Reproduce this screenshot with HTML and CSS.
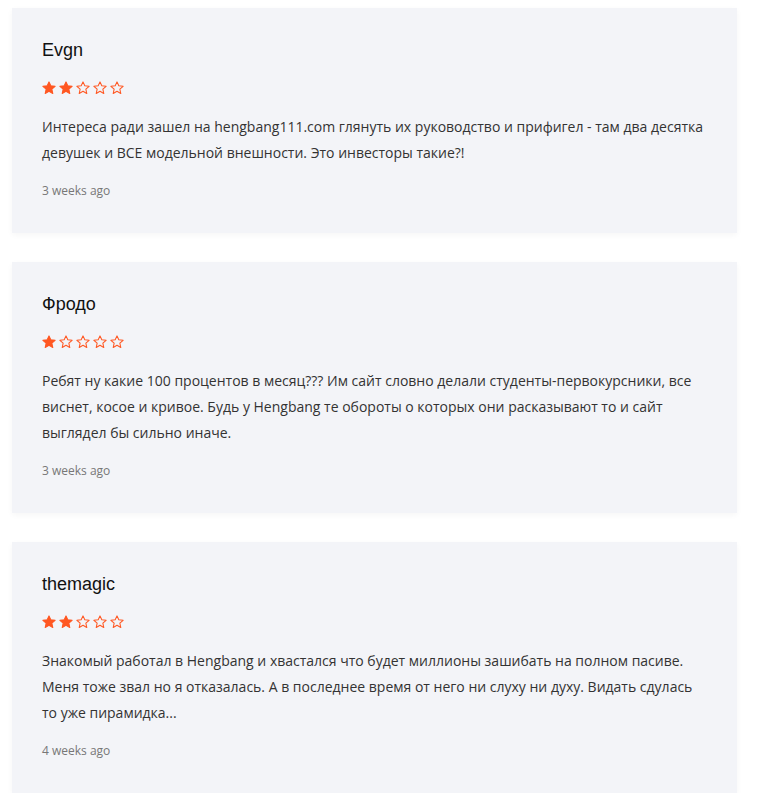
FILE: index.html
```html
<!DOCTYPE html>
<html lang="ru">
<head>
  <meta charset="UTF-8" />
  <title>Отзывы</title>
  <meta name="viewport" content="width=device-width, initial-scale=1.0" />
  <link rel="stylesheet" href="styles.css">
</head>
<body>

  <div class="reviews">

    <div class="review">
      <div class="review-name">Evgn</div>
      <div class="stars">
        <svg class="star full" viewBox="0 0 24 24"><polygon points="12,1.5 15.1,8.3 22.5,9.1 16.9,14.1 18.5,21.5 12,17.7 5.5,21.5 7.1,14.1 1.5,9.1 8.9,8.3"/></svg>
        <svg class="star full" viewBox="0 0 24 24"><polygon points="12,1.5 15.1,8.3 22.5,9.1 16.9,14.1 18.5,21.5 12,17.7 5.5,21.5 7.1,14.1 1.5,9.1 8.9,8.3"/></svg>
        <svg class="star" viewBox="0 0 24 24"><polygon points="12,1.5 15.1,8.3 22.5,9.1 16.9,14.1 18.5,21.5 12,17.7 5.5,21.5 7.1,14.1 1.5,9.1 8.9,8.3"/></svg>
        <svg class="star" viewBox="0 0 24 24"><polygon points="12,1.5 15.1,8.3 22.5,9.1 16.9,14.1 18.5,21.5 12,17.7 5.5,21.5 7.1,14.1 1.5,9.1 8.9,8.3"/></svg>
        <svg class="star" viewBox="0 0 24 24"><polygon points="12,1.5 15.1,8.3 22.5,9.1 16.9,14.1 18.5,21.5 12,17.7 5.5,21.5 7.1,14.1 1.5,9.1 8.9,8.3"/></svg>
      </div>
      <p class="review-text">Интереса ради зашел на hengbang111.com глянуть их руководство и прифигел - там два десятка девушек и ВСЕ модельной внешности. Это инвесторы такие?!</p>
      <div class="review-date">3 weeks ago</div>
    </div>

    <div class="review">
      <div class="review-name">Фродо</div>
      <div class="stars">
        <svg class="star full" viewBox="0 0 24 24"><polygon points="12,1.5 15.1,8.3 22.5,9.1 16.9,14.1 18.5,21.5 12,17.7 5.5,21.5 7.1,14.1 1.5,9.1 8.9,8.3"/></svg>
        <svg class="star" viewBox="0 0 24 24"><polygon points="12,1.5 15.1,8.3 22.5,9.1 16.9,14.1 18.5,21.5 12,17.7 5.5,21.5 7.1,14.1 1.5,9.1 8.9,8.3"/></svg>
        <svg class="star" viewBox="0 0 24 24"><polygon points="12,1.5 15.1,8.3 22.5,9.1 16.9,14.1 18.5,21.5 12,17.7 5.5,21.5 7.1,14.1 1.5,9.1 8.9,8.3"/></svg>
        <svg class="star" viewBox="0 0 24 24"><polygon points="12,1.5 15.1,8.3 22.5,9.1 16.9,14.1 18.5,21.5 12,17.7 5.5,21.5 7.1,14.1 1.5,9.1 8.9,8.3"/></svg>
        <svg class="star" viewBox="0 0 24 24"><polygon points="12,1.5 15.1,8.3 22.5,9.1 16.9,14.1 18.5,21.5 12,17.7 5.5,21.5 7.1,14.1 1.5,9.1 8.9,8.3"/></svg>
      </div>
      <p class="review-text">Ребят ну какие 100 процентов в месяц??? Им сайт словно делали студенты-первокурсники, все виснет, косое и кривое. Будь у Hengbang те обороты о которых они расказывают то и сайт выглядел бы сильно иначе.</p>
      <div class="review-date">3 weeks ago</div>
    </div>

    <div class="review">
      <div class="review-name">themagic</div>
      <div class="stars">
        <svg class="star full" viewBox="0 0 24 24"><polygon points="12,1.5 15.1,8.3 22.5,9.1 16.9,14.1 18.5,21.5 12,17.7 5.5,21.5 7.1,14.1 1.5,9.1 8.9,8.3"/></svg>
        <svg class="star full" viewBox="0 0 24 24"><polygon points="12,1.5 15.1,8.3 22.5,9.1 16.9,14.1 18.5,21.5 12,17.7 5.5,21.5 7.1,14.1 1.5,9.1 8.9,8.3"/></svg>
        <svg class="star" viewBox="0 0 24 24"><polygon points="12,1.5 15.1,8.3 22.5,9.1 16.9,14.1 18.5,21.5 12,17.7 5.5,21.5 7.1,14.1 1.5,9.1 8.9,8.3"/></svg>
        <svg class="star" viewBox="0 0 24 24"><polygon points="12,1.5 15.1,8.3 22.5,9.1 16.9,14.1 18.5,21.5 12,17.7 5.5,21.5 7.1,14.1 1.5,9.1 8.9,8.3"/></svg>
        <svg class="star" viewBox="0 0 24 24"><polygon points="12,1.5 15.1,8.3 22.5,9.1 16.9,14.1 18.5,21.5 12,17.7 5.5,21.5 7.1,14.1 1.5,9.1 8.9,8.3"/></svg>
      </div>
      <p class="review-text">Знакомый работал в Hengbang и хвастался что будет миллионы зашибать на полном пасиве. Меня тоже звал но я отказалась. А в последнее время от него ни слуху ни духу. Видать сдулась то уже пирамидка...</p>
      <div class="review-date">4 weeks ago</div>
    </div>

  </div>

</body>
</html>
```

FILE: styles.css
```css
body {
  margin: 0;
  padding: 8px 34px 0 12px;
  background-color: #fff;
  font-family: "Open Sans", sans-serif;
  color: #333;
}

.reviews {
  display: flex;
  flex-direction: column;
  gap: 29px;
}

.review {
  background-color: #f3f4f8;
  padding: 30px 30px 33px 30px;
  box-shadow: 0 2px 6px rgba(0, 0, 0, 0.04);
}

.review-name {
  font-family: "Liberation Sans", Arial, sans-serif;
  font-size: 18px;
  line-height: 24px;
  color: #111;
}

.stars {
  display: flex;
  gap: 3px;
  margin-top: 19px;
  height: 14px;
}

.star {
  width: 14px;
  height: 14px;
  fill: none;
  stroke: #ff5722;
  stroke-width: 1.8;
  stroke-linejoin: round;
}

.star.full {
  fill: #ff5722;
}

.review-text {
  margin: 19px 0 0 0;
  font-size: 14px;
  line-height: 26px;
  color: #333;
}

.review-date {
  margin-top: 16px;
  font-size: 12px;
  line-height: 18px;
  color: #777;
}
```
